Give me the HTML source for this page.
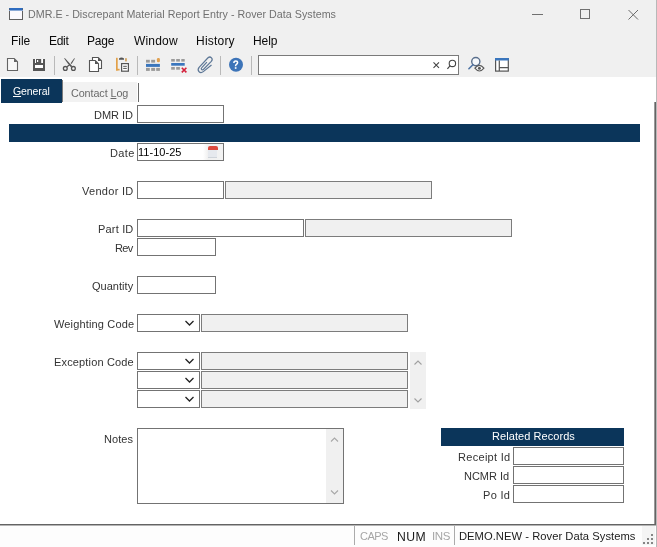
<!DOCTYPE html>
<html><head><meta charset="utf-8">
<style>
*{box-sizing:border-box;margin:0;padding:0}
html,body{width:657px;height:547px;overflow:hidden;background:#fff}
body{position:relative;font-family:"Liberation Sans",sans-serif;font-size:11px;color:#222}
.a{position:absolute}
.t{position:absolute;white-space:nowrap;line-height:14px;height:14px;will-change:transform}
.r{text-align:right}
.in{position:absolute;background:#fff;border:1px solid #737373}
.gr{position:absolute;background:#f0f0f0;border:1px solid #7c7c7c}
.nav{position:absolute;background:#0b355a}
.sep{position:absolute;width:1px;background:#b9b9b9}
</style></head><body>
<!-- title bar + menu + toolbar background -->
<div class="a" style="left:0;top:0;width:657px;height:77px;background:#f0f0f0"></div>

<!-- title icon -->
<div class="a" style="left:9px;top:8px;width:14px;height:12px;border:1px solid #5f5f5f;border-top:2px solid #2d6cc0;background:#fbf9fd"></div><div class="a" style="left:9px;top:10px;width:14px;height:1px;background:#8aa9d6"></div>

<!-- window controls -->
<div class="a" style="left:532px;top:14px;width:11px;height:1px;background:#707070"></div>
<div class="a" style="left:580px;top:9px;width:10px;height:10px;border:1px solid #707070"></div>
<svg class="a" style="left:627px;top:9px" width="12" height="12" viewBox="0 0 12 12"><path d="M1.5 1L11 10.5M11 1L1.5 10.5" stroke="#6a6a6a" stroke-width="1"/></svg>

<!-- menu -->

<!-- toolbar separators -->
<div class="sep" style="left:54px;top:56px;height:19px"></div>
<div class="sep" style="left:137px;top:56px;height:19px"></div>
<div class="sep" style="left:220px;top:56px;height:19px"></div>
<div class="sep" style="left:251px;top:56px;height:19px"></div>

<!-- search box -->
<div class="a" style="left:258px;top:55px;width:201px;height:20px;background:#fff;border:1px solid #7a7a7a"></div>

<svg class="a" style="left:0;top:0" width="657" height="78" viewBox="0 0 657 78">
 <!-- new doc -->
 <path d="M7.5 58.5H14.2L17.5 61.8V70.5H7.5Z" fill="#f7f7f7" stroke="#646464" stroke-width="1.1"/>
 <path d="M14 58.5V62H17.5Z" fill="#646464"/>
 <!-- save -->
 <g fill="#555">
  <rect x="33" y="59" width="2" height="12"/><rect x="43" y="59" width="2" height="12"/>
  <rect x="36" y="59" width="5.4" height="4"/><rect x="33" y="63" width="12" height="2"/><rect x="35" y="65" width="8" height="3" fill="#fff"/><rect x="35" y="59" width="1" height="4" fill="#fff"/><rect x="41.4" y="59" width="1.6" height="4" fill="#fff"/>
  <rect x="33" y="68" width="12" height="3"/>
 </g>
 <rect x="37" y="60" width="1.2" height="2" fill="#fff"/>
 <!-- scissors -->
 <g fill="#555">
  <path d="M64 58.2L65 58.2L72.3 66.2L71 67.3L67.6 63.2Z"/>
  <path d="M74.2 58.3L74.9 58.6L71.6 64L70.6 63.2Z"/>
 </g>
 <circle cx="65.3" cy="68.4" r="1.9" fill="none" stroke="#555" stroke-width="1.3"/>
 <circle cx="73.4" cy="68.4" r="1.9" fill="none" stroke="#555" stroke-width="1.3"/>
 <path d="M67 66.8L70 64.5" stroke="#555" stroke-width="1.2"/>
 <!-- copy -->
 <path d="M92.5 57.5H98.2L101.5 60.8V68.5H92.5Z" fill="#fff" stroke="#555" stroke-width="1.1"/>
 <path d="M98 57.5V61H101.5Z" fill="#555"/>
 <path d="M89.5 60.5H95.2L98.5 63.8V71.5H89.5Z" fill="#fff" stroke="#555" stroke-width="1.1"/>
 <path d="M95 60.5V64H98.5Z" fill="#555"/>
 <!-- paste -->
 <rect x="116" y="57.8" width="1.7" height="12.7" fill="#e2a048"/>
 <rect x="116" y="68.8" width="3.6" height="1.7" fill="#e2a048"/>
 <rect x="125" y="58.2" width="1.9" height="3.2" fill="#d4a868"/>
 <path d="M119 59.8V58.6Q121.5 56.5 124 58.6V59.8Z" fill="#555"/>
 <rect x="121.6" y="63.6" width="6.8" height="7.6" fill="#fff" stroke="#555" stroke-width="1.2"/>
 <rect x="123.2" y="65.8" width="3.6" height="1" fill="#555"/>
 <rect x="123.2" y="67.9" width="3.6" height="1" fill="#555"/>
 <!-- insert row -->
 <g fill="#9a9a9a">
  <rect x="146" y="59.8" width="3.8" height="2.8"/><rect x="151.2" y="59.8" width="3.9" height="2.8"/>
  <rect x="146" y="67.9" width="3.8" height="3"/><rect x="151.2" y="67.9" width="3.9" height="3"/><rect x="156.2" y="67.9" width="3.7" height="3"/>
 </g>
 <rect x="146" y="63.9" width="13.9" height="3" fill="#3a76bd"/>
 <rect x="156.9" y="58" width="3" height="4.2" rx="1.3" fill="#e0a050"/>
 <!-- delete row -->
 <g fill="#9a9a9a">
  <rect x="171.2" y="59" width="3.6" height="2.6"/><rect x="176.2" y="59" width="3.7" height="2.6"/><rect x="181.3" y="59" width="3.4" height="2.6"/>
  <rect x="171.2" y="67" width="3.6" height="2.7"/><rect x="176.2" y="67" width="3.7" height="2.7"/>
 </g>
 <rect x="171.2" y="63" width="13.5" height="2.7" fill="#3a76bd"/>
 <path d="M181.8 67.8L186.4 72.4M186.4 67.8L181.8 72.4" stroke="#d4213c" stroke-width="1.6"/>
 <!-- paperclip -->
 <path d="M211.5 65L203.3 71.6Q200.8 73.6 198.9 71.5Q197.2 69.5 199.3 67.1L208 57.8Q209.9 56.2 211.5 57.8Q213 59.4 211.3 61.3L203.6 69.2Q202.2 70.4 201.5 69.5Q200.8 68.6 201.8 67.6L206.9 62.1" fill="none" stroke="#5d7796" stroke-width="1.2"/>
 <!-- help -->
 <circle cx="236" cy="64.8" r="7" fill="#3d74b8"/>
 <path d="M233.9 62.9Q233.9 60.9 235.7 60.9Q237.6 60.9 237.6 62.6Q237.6 63.7 236.4 64.4Q235.6 64.9 235.6 65.9V66.3" fill="none" stroke="#fff" stroke-width="1.5"/><rect x="234.8" y="67.2" width="1.7" height="1.6" fill="#fff"/>
 <!-- search x & magnifier -->
 <path d="M433.5 62.3L439 67.8M439 62.3L433.5 67.8" stroke="#444" stroke-width="1.1"/>
 <circle cx="452.4" cy="63.4" r="3.2" fill="none" stroke="#444" stroke-width="1.1"/>
 <path d="M450.2 65.7L447.4 68.8" stroke="#444" stroke-width="1.2"/>
 <!-- lookup -->
 <circle cx="475.8" cy="61.6" r="4.1" fill="#f6f8fb" stroke="#5a6f8c" stroke-width="1.4"/>
 <path d="M472.9 64.7L468.9 68.7" stroke="#4f73a3" stroke-width="1.6" stroke-linecap="round"/>
 <path d="M474.9 68.2Q479.4 62.6 483.9 68.2Q479.4 73.8 474.9 68.2Z" fill="#fff" stroke="#5a5a5a" stroke-width="1.2"/>
 <circle cx="479.4" cy="68.2" r="1.5" fill="#5a5a5a"/>
 <!-- layout -->
 <rect x="495.6" y="58.6" width="12.7" height="12.5" fill="#fff" stroke="#555" stroke-width="1.2"/>
 <rect x="495" y="58" width="13.9" height="2.5" fill="#3a76bd"/>
 <path d="M499.3 60.5V71M499.3 67.6H508.3" stroke="#555" stroke-width="1.2"/>
</svg>

<!-- tabs -->
<div class="nav" style="left:1px;top:79px;width:61px;height:24px"></div>
<div class="a" style="left:62px;top:80px;width:1px;height:22px;background:#7a7a7a"></div>
<div class="a" style="left:63px;top:82px;width:74px;height:20px;background:#f2f2f2"></div>
<div class="a" style="left:138px;top:83px;width:1px;height:19px;background:#6a6a6a"></div>

<!-- right border -->
<div class="a" style="left:654px;top:102px;width:1px;height:423px;background:#9a9a9a"></div><div class="a" style="left:655px;top:102px;width:1px;height:424px;background:#646464"></div>
<div class="a" style="left:656px;top:0;width:1px;height:547px;background:#b8b8b8"></div>

<!-- form -->
<div class="in" style="left:137px;top:105px;width:87px;height:18px"></div>
<div class="nav" style="left:9px;top:124px;width:631px;height:18px"></div>

<div class="in" style="left:137px;top:143px;width:87px;height:18px"></div>
<div class="a" style="left:203px;top:144px;width:20px;height:16px;background:linear-gradient(90deg,#fff,#f0f0f0 25%,#f3f3f3)"></div>
<div class="a" style="left:208px;top:146px;width:10px;height:4px;background:#dc4a3e;border-radius:2px 2px 0 0"></div>
<div class="a" style="left:208px;top:150px;width:9px;height:8px;background:#e6e9ee;border-bottom:1px solid #cfd4da"></div>

<div class="in" style="left:137px;top:181px;width:87px;height:18px"></div>
<div class="gr" style="left:225px;top:181px;width:207px;height:18px"></div>

<div class="in" style="left:137px;top:219px;width:167px;height:18px"></div>
<div class="gr" style="left:305px;top:219px;width:207px;height:18px"></div>
<div class="in" style="left:137px;top:238px;width:79px;height:18px"></div>

<div class="in" style="left:137px;top:276px;width:79px;height:18px"></div>

<div class="in" style="left:137px;top:314px;width:63px;height:18px"></div>
<div class="gr" style="left:201px;top:314px;width:207px;height:18px"></div>

<div class="in" style="left:137px;top:352px;width:63px;height:18px"></div>
<div class="gr" style="left:201px;top:352px;width:207px;height:18px"></div>
<div class="in" style="left:137px;top:371px;width:63px;height:18px"></div>
<div class="gr" style="left:201px;top:371px;width:207px;height:18px"></div>
<div class="in" style="left:137px;top:390px;width:63px;height:18px"></div>
<div class="gr" style="left:201px;top:390px;width:207px;height:18px"></div>
<div class="a" style="left:410px;top:352px;width:16px;height:57px;background:#f0f0f0"></div>

<div class="in" style="left:137px;top:428px;width:207px;height:76px"></div>
<div class="a" style="left:326px;top:429px;width:17px;height:74px;background:#f0f0f0"></div>

<div class="nav" style="left:441px;top:428px;width:183px;height:18px"></div>
<div class="in" style="left:513px;top:447px;width:111px;height:18px"></div>
<div class="in" style="left:513px;top:466px;width:111px;height:18px"></div>
<div class="in" style="left:513px;top:485px;width:111px;height:18px"></div>

<!-- status bar -->
<div class="a" style="left:0;top:524px;width:656px;height:1px;background:#646464"></div>
<div class="a" style="left:0;top:525px;width:656px;height:22px;background:#fdfdfd"></div><div class="a" style="left:0;top:525px;width:656px;height:1px;background:#b4b4b4"></div>
<div class="a" style="left:354px;top:526px;width:1px;height:19px;background:#ababab"></div>
<div class="a" style="left:454px;top:526px;width:1px;height:19px;background:#ababab"></div>
<svg class="a" style="left:0;top:0" width="657" height="547" viewBox="0 0 657 547"><path d="M185.5 321L189.5 325L193.5 321" fill="none" stroke="#222" stroke-width="1.3"/><path d="M185.5 359L189.5 363L193.5 359" fill="none" stroke="#222" stroke-width="1.3"/><path d="M185.5 378L189.5 382L193.5 378" fill="none" stroke="#222" stroke-width="1.3"/><path d="M185.5 397L189.5 401L193.5 397" fill="none" stroke="#222" stroke-width="1.3"/><path d="M414.5 364.5L418 361L421.5 364.5" fill="none" stroke="#a0a0a0" stroke-width="1.1"/><path d="M414.5 398.5L418 402L421.5 398.5" fill="none" stroke="#a0a0a0" stroke-width="1.1"/><path d="M331 441.5L334.5 438L338 441.5" fill="none" stroke="#a8a8a8" stroke-width="1.1"/><path d="M331 490.5L334.5 494L338 490.5" fill="none" stroke="#a8a8a8" stroke-width="1.1"/><rect x="642" y="526" width="13" height="19" fill="#f4f4f4"/><g fill="#858585"><rect x="651" y="534" width="2" height="2"/><rect x="647" y="538" width="2" height="2"/><rect x="651" y="538" width="2" height="2"/><rect x="643" y="542" width="2" height="2"/><rect x="647" y="542" width="2" height="2"/><rect x="651" y="542" width="2" height="2"/></g></svg>
<div class="t" style="left:28.00px;top:7.00px;font-size:10.7px;color:#707070;letter-spacing:0.024px">DMR.E - Discrepant Material Report Entry - Rover Data Systems</div>
<div class="t" style="left:11.00px;top:34.00px;font-size:12px;color:#0a0a0a;letter-spacing:-0.060px">File</div>
<div class="t" style="left:49.00px;top:34.00px;font-size:12px;color:#0a0a0a;letter-spacing:-0.300px">Edit</div>
<div class="t" style="left:87.00px;top:34.00px;font-size:12px;color:#0a0a0a;letter-spacing:-0.240px">Page</div>
<div class="t" style="left:134.00px;top:34.00px;font-size:12px;color:#0a0a0a;letter-spacing:0.180px">Window</div>
<div class="t" style="left:196.00px;top:34.00px;font-size:12px;color:#0a0a0a;letter-spacing:0.210px">History</div>
<div class="t" style="left:253.00px;top:34.00px;font-size:12px;color:#0a0a0a;letter-spacing:-0.060px">Help</div>
<div class="t" style="left:13.00px;top:84.00px;font-size:10.5px;color:#ffffff;letter-spacing:-0.090px"><u>G</u>eneral</div>
<div class="t" style="left:71.00px;top:86.00px;font-size:10.8px;color:#6a6a6a;letter-spacing:-0.090px">Contact <u>L</u>og</div>
<div class="t" style="left:94.00px;top:108.00px;font-size:11px;color:#333;letter-spacing:-0.036px">DMR ID</div>
<div class="t" style="left:110.00px;top:146.00px;font-size:11px;color:#333;letter-spacing:0.360px">Date</div>
<div class="t" style="left:138.00px;top:145.00px;font-size:11px;color:#000;letter-spacing:0.026px">11-10-25</div>
<div class="t" style="left:82.00px;top:184.00px;font-size:11px;color:#333;letter-spacing:0.293px">Vendor ID</div>
<div class="t" style="left:98.00px;top:222.00px;font-size:11px;color:#333;letter-spacing:0.180px">Part ID</div>
<div class="t" style="left:115.00px;top:241.00px;font-size:11px;color:#333;letter-spacing:-0.630px">Rev</div>
<div class="t" style="left:92.00px;top:279.00px;font-size:11px;color:#333;letter-spacing:0.026px">Quantity</div>
<div class="t" style="left:54.00px;top:317.00px;font-size:11px;color:#333;letter-spacing:0.152px">Weighting Code</div>
<div class="t" style="left:54.00px;top:355.00px;font-size:11px;color:#333;letter-spacing:0.152px">Exception Code</div>
<div class="t" style="left:104.00px;top:432.00px;font-size:11px;color:#333;letter-spacing:0.045px">Notes</div>
<div class="t" style="left:492.00px;top:429.00px;font-size:11px;color:#ffffff;letter-spacing:0.064px">Related Records</div>
<div class="t" style="left:458.00px;top:450.00px;font-size:11px;color:#333;letter-spacing:0.300px">Receipt Id</div>
<div class="t" style="left:464.00px;top:469.00px;font-size:11px;color:#333;letter-spacing:-0.030px">NCMR Id</div>
<div class="t" style="left:483.00px;top:488.00px;font-size:11px;color:#333;letter-spacing:0.315px">Po Id</div>
<div class="t" style="left:360.00px;top:529.00px;font-size:11px;color:#a6a6a6;letter-spacing:-0.550px">CAPS</div>
<div class="t" style="left:397.00px;top:530.00px;font-size:12.2px;color:#1a1a1a;letter-spacing:0.435px">NUM</div>
<div class="t" style="left:432.00px;top:529.00px;font-size:11.5px;color:#a6a6a6;letter-spacing:-0.360px">INS</div>
<div class="t" style="left:459.00px;top:529.00px;font-size:11.2px;color:#1a1a1a;letter-spacing:0.039px">DEMO.NEW - Rover Data Systems</div>
</body></html>
